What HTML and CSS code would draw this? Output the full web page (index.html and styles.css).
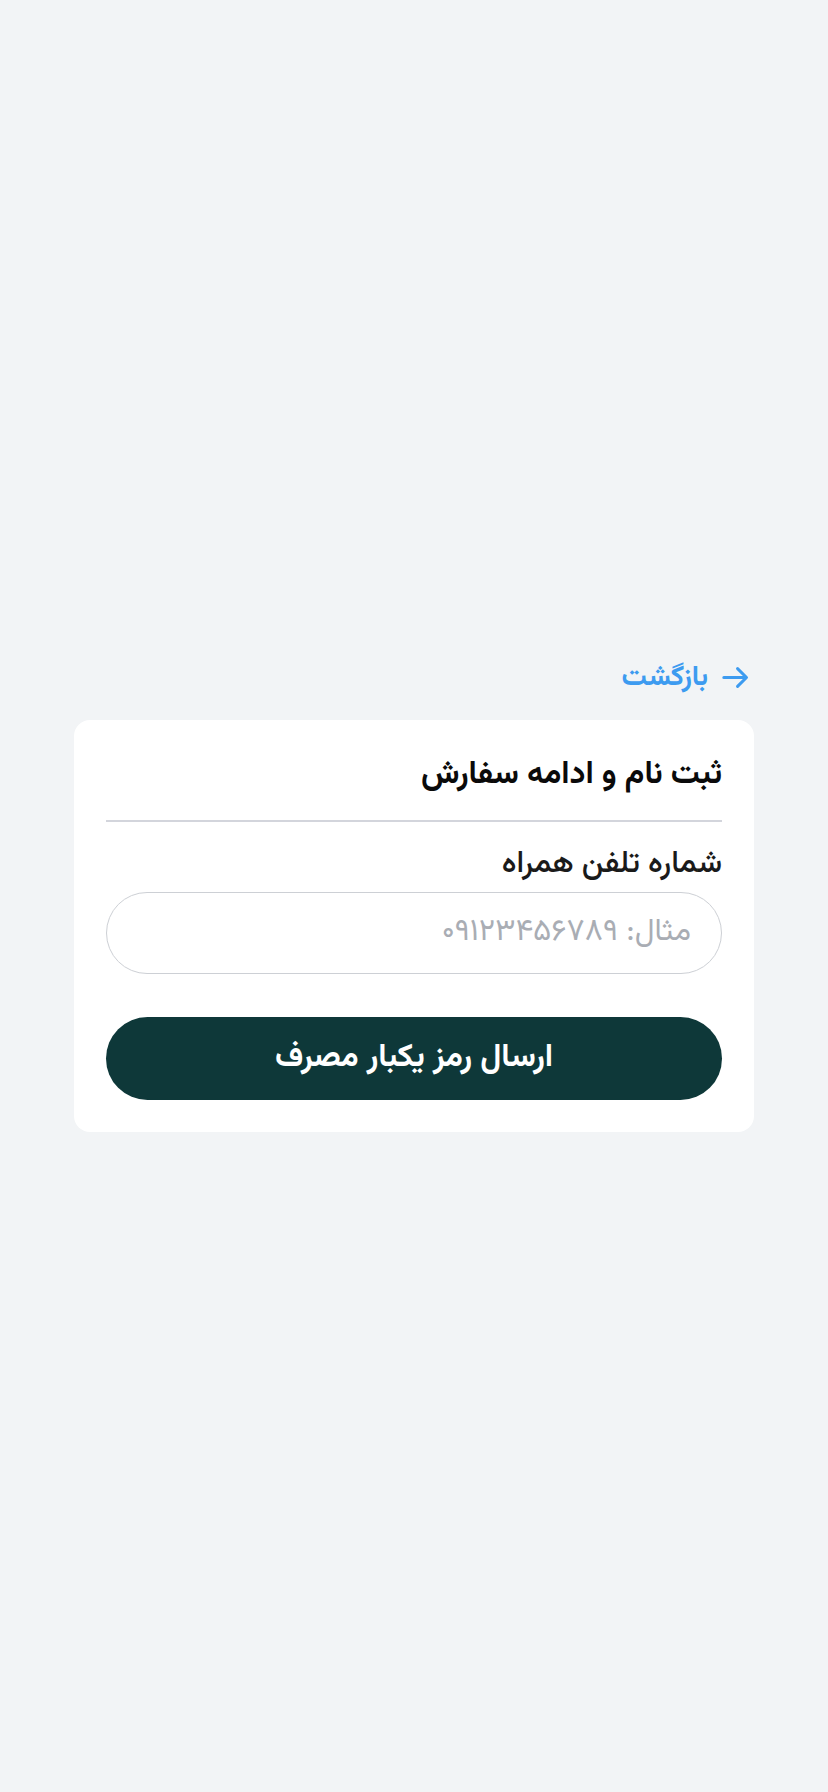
FILE: index.html
```html
<!DOCTYPE html>
<html lang="fa" dir="rtl">
<head>
<meta charset="utf-8">
<title>ثبت نام و ادامه سفارش</title>
<link rel="stylesheet" href="styles.css">
</head>
<body>
<main class="page">
  <div class="wrap">
    <a class="back" href="#">
      <svg class="back-icon" viewBox="0 0 24 24" width="33" height="33" aria-hidden="true">
        <path d="M3.5 12h16M13.5 5.5l6.5 6.5-6.5 6.5" fill="none" stroke="currentColor" stroke-width="2.2" stroke-linecap="round" stroke-linejoin="round"/>
      </svg>
      <span>بازگشت</span>
    </a>
    <section class="card">
      <h1 class="title">ثبت نام و ادامه سفارش</h1>
      <hr class="divider">
      <label class="label" for="phone">شماره تلفن همراه</label>
      <input class="input" id="phone" type="text" inputmode="tel" dir="rtl" placeholder="مثال: ۰۹۱۲۳۴۵۶۷۸۹">
      <button class="submit" type="button">ارسال رمز یکبار مصرف</button>
    </section>
  </div>
</main>
</body>
</html>
```
FILE: styles.css
```css
* { box-sizing: border-box; }
html, body { margin: 0; padding: 0; }
body {
  background: #f2f4f6;
  font-family: "Vazirmatn", "Noto Sans Arabic", "DejaVu Sans", sans-serif;
  color: #111;
}
.page {
  min-height: 100vh;
  display: flex;
  align-items: center;
  justify-content: center;
}
.wrap {
  width: 680px;
  display: flex;
  flex-direction: column;
}
.back {
  align-self: flex-start;
  display: flex;
  align-items: center;
  gap: 11px;
  margin-inline-start: 2px;
  margin-bottom: 25px;
  color: #3d9bf0;
  text-decoration: none;
  font-size: 28px;
  font-weight: bold;
  line-height: 34px;
}
.back-icon { display: block; }
.card {
  background: #fff;
  border-radius: 16px;
  padding: 32px;
  display: flex;
  flex-direction: column;
}
.title {
  margin: 0;
  font-size: 32px;
  line-height: 46px;
  font-weight: bold;
  color: #0a0a0a;
}
.divider {
  margin: 22px 0 24px;
  border: 0;
  border-top: 2px solid #d3d5dc;
  height: 0;
}
.label {
  font-size: 31px;
  line-height: 38px;
  font-weight: 500;
  color: #1a1a1a;
  margin-bottom: 8px;
}
.input {
  height: 82px;
  border: 1.5px solid #cdd0d5;
  border-radius: 999px;
  padding: 0 30px;
  font-family: inherit;
  font-size: 31px;
  color: #111;
  background: #fff;
  outline: none;
  direction: rtl;
  text-align: right;
}
.input::placeholder { color: #a9adb4; }
.submit {
  margin-top: 43px;
  height: 83px;
  border: 0;
  border-radius: 999px;
  background: #0e3839;
  color: #fff;
  font-family: inherit;
  font-size: 32px;
  font-weight: bold;
  cursor: pointer;
}
```
